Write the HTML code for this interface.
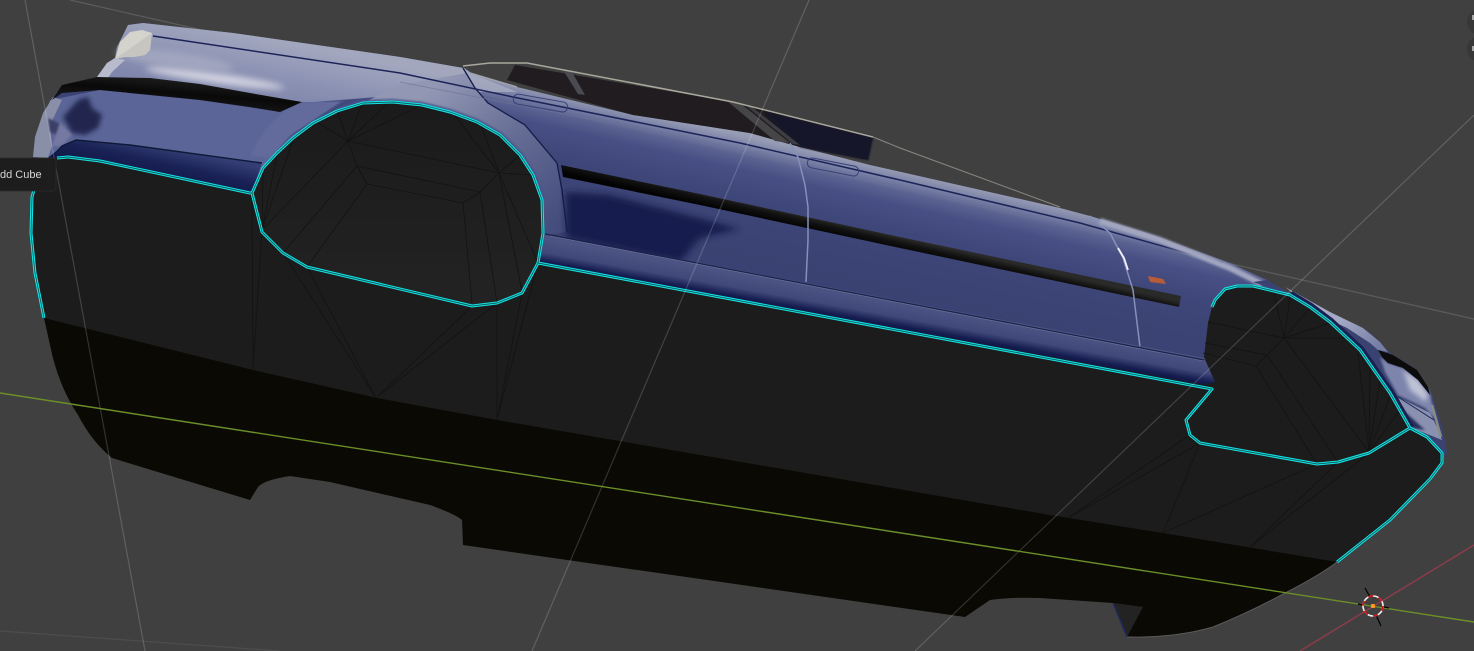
<!DOCTYPE html>
<html><head><meta charset="utf-8"><style>
html,body{margin:0;padding:0;background:#404040;width:1474px;height:651px;overflow:hidden}
svg{display:block}
</style></head><body>
<svg width="1474" height="651" viewBox="0 0 1474 651" xmlns="http://www.w3.org/2000/svg">
<defs>
<filter id="b1" x="-20%" y="-20%" width="140%" height="140%"><feGaussianBlur stdDeviation="1"/></filter>
<filter id="b2" x="-20%" y="-50%" width="140%" height="200%"><feGaussianBlur stdDeviation="2.5"/></filter>
<filter id="b3" x="-30%" y="-60%" width="160%" height="220%"><feGaussianBlur stdDeviation="3.5"/></filter>
<filter id="b5" x="-30%" y="-100%" width="160%" height="300%"><feGaussianBlur stdDeviation="5"/></filter>
<linearGradient id="body" gradientUnits="userSpaceOnUse" x1="600" y1="103" x2="556" y2="298">
<stop offset="0" stop-color="#989db6"/><stop offset=".05" stop-color="#7b82a6"/><stop offset=".1" stop-color="#5b6392"/>
<stop offset=".17" stop-color="#484f84"/><stop offset=".3" stop-color="#3f477a"/><stop offset=".5" stop-color="#3b4374"/><stop offset="1" stop-color="#394170"/>
</linearGradient>
<linearGradient id="mould" gradientUnits="userSpaceOnUse" x1="800" y1="285" x2="795" y2="312.5">
<stop offset="0" stop-color="#4c5484"/><stop offset=".5" stop-color="#3f4879"/><stop offset=".8" stop-color="#151c50"/><stop offset="1" stop-color="#10173f"/>
</linearGradient>
<linearGradient id="deck" gradientUnits="userSpaceOnUse" x1="220" y1="30" x2="205" y2="105">
<stop offset="0" stop-color="#a2a7be"/><stop offset=".5" stop-color="#8a90b2"/><stop offset="1" stop-color="#7a81a8"/>
</linearGradient>
<linearGradient id="strip" gradientUnits="userSpaceOnUse" x1="870" y1="230" x2="867" y2="243">
<stop offset="0" stop-color="#2a2a28"/><stop offset=".45" stop-color="#111"/><stop offset="1" stop-color="#030303"/>
</linearGradient>
<linearGradient id="strip1" gradientUnits="userSpaceOnUse" x1="180" y1="80" x2="178" y2="104">
<stop offset="0" stop-color="#1c1c1c"/><stop offset=".55" stop-color="#090909"/><stop offset="1" stop-color="#141414"/>
</linearGradient>
<linearGradient id="band" gradientUnits="userSpaceOnUse" x1="170" y1="148" x2="163" y2="180">
<stop offset="0" stop-color="#343e74"/><stop offset=".5" stop-color="#1a2256"/><stop offset="1" stop-color="#121a4a"/>
</linearGradient>
<linearGradient id="rim" gradientUnits="userSpaceOnUse" x1="440" y1="80" x2="560" y2="220">
<stop offset="0" stop-color="#9298b4"/><stop offset=".5" stop-color="#656c94"/><stop offset="1" stop-color="#454d7e"/>
</linearGradient>
<linearGradient id="arch" gradientUnits="userSpaceOnUse" x1="400" y1="110" x2="400" y2="310">
<stop offset="0" stop-color="#1b1b1b"/><stop offset="1" stop-color="#232323"/>
</linearGradient>
<linearGradient id="endtop" gradientUnits="userSpaceOnUse" x1="1345" y1="315" x2="1375" y2="350">
<stop offset="0" stop-color="#a4a9c4"/><stop offset="1" stop-color="#767ea6"/>
</linearGradient>
</defs>

<rect width="1474" height="651" fill="#404040"/>

<g stroke="#5c5c5c" stroke-width="1.2" fill="none">
<line x1="70" y1="0" x2="1474" y2="319"/>
<line x1="0" y1="631" x2="280" y2="651" stroke="#4d4d4d"/>
</g>

<circle cx="1480" cy="22" r="13" fill="#373737"/><circle cx="1480" cy="49" r="13" fill="#373737"/>
<rect x="1472" y="15" width="2" height="5" fill="#a5a5a5"/><rect x="1472" y="46" width="2" height="5" fill="#a5a5a5"/>

<!-- lower black body -->
<path d="M1113 603L1143 607Q1150 615 1147 620L1127 637Z" fill="#232323"/>
<line x1="1113" y1="603" x2="1127" y2="637" stroke="#1d2a5e" stroke-width="1.5"/>
<path fill="#0a0904" d="M44 318L50 345Q58 385 78 415Q92 442 112 458L250 500L258 487Q264 480 290 476L330 482L430 505Q455 514 462 520L463 545L965 617L990 600Q1010 597 1040 598L1113 603L1143 607L1127 637Q1175 638 1213 627Q1250 612 1287 592Q1320 575 1337 562L1300 400L500 300Z"/>
<path d="M1127 637Q1175 638 1213 627Q1250 612 1287 592Q1320 575 1337 562" fill="none" stroke="#5a5a5a" stroke-width="1"/>

<!-- blue body base -->
<polygon fill="url(#body)" points="33,157 35,137 43,113 53,97 62,85 97,77 107,63 115,58 117,47 128,25 143,23 233,33 400,57 463,68 470,73 517,87 633,115 750,133 800,147 870,165 1060,208 1090,216 1147,233 1230,263 1267,280 1313,307 1370,333 1390,353 1413,367 1430,390 1442,427 1447,453 1430,480 1200,400 300,250 33,200"/>

<!-- windows / roof -->
<polygon fill="#201c1f" points="515,65 733,102 873,137 868,160 800,147 750,133 633,115 507,80"/>
<polygon fill="#12122a" points="765,112 873,137 868,160 800,147 780,128" filter="url(#b1)"/>
<polygon fill="#4a4a50" points="563,70 572,72 585,95 578,94"/>
<polygon fill="#454548" points="727,101 740,103 790,143 775,141"/>
<polygon fill="#3d3d44" points="745,105 752,107 800,145 793,144"/>
<polyline points="463,66 490,63 527,63 733,102 873,137" fill="none" stroke="#a8a89c" stroke-width="1.5"/>
<polyline points="873,137 900,148 1060,207" fill="none" stroke="#8a8a82" stroke-width="1"/>
<polyline points="463,68 470,73 517,87" fill="none" stroke="#a0a3ae" stroke-width="1.5"/>

<!-- rear deck -->
<polygon fill="url(#deck)" points="97,77 107,63 115,58 117,47 128,25 143,23 233,33 400,57 463,68 470,73 517,92 470,92 390,96 340,100 302,103 150,80"/>
<ellipse cx="215" cy="78" rx="70" ry="5" transform="rotate(8 215 78)" fill="#e6e6ee" opacity=".8" filter="url(#b3)"/>
<ellipse cx="175" cy="60" rx="60" ry="8" transform="rotate(8 175 60)" fill="#b0b4c8" opacity=".6" filter="url(#b3)"/>
<polygon fill="#d4d3cc" points="115,59 120,42 130,32 142,30 152,33 150,50 145,55 133,57 125,57"/>
<polygon fill="#c6c5c0" points="115,59 152,33 150,50 145,55 133,57 125,57"/>
<polygon fill="#b7bbcc" points="97,77 107,63 115,58 125,60 112,72 108,78"/>

<!-- rear flank -->
<polygon fill="#5b6597" points="50,100 100,90 200,100 280,112 302,102 340,102 290,135 262,168 250,193 100,161 57,158 45,155 38,137"/>
<polygon fill="#6a72a2" opacity=".5" points="285,111 300,103 345,100 300,130 270,158 250,155 265,130" filter="url(#b1)"/>
<polygon fill="#8a8fa8" points="33,157 35,137 43,113 53,97 62,100 50,125 52,146 48,158"/>
<polygon fill="#3a3f66" points="48,118 62,125 58,135 50,132" filter="url(#b1)"/>
<polygon fill="#20254f" points="63,117 78,100 88,97 92,108 102,115 98,128 85,135 72,133" filter="url(#b2)"/>
<polygon fill="#7478a0" points="52,146 60,122 72,135 62,146" filter="url(#b1)"/>
<polygon fill="url(#band)" points="48,158 62,146 76,140 130,145 262,163 252,193 100,161 57,158"/>
<polyline points="52,157 62,146 76,140 130,145 262,163" fill="none" stroke="#101838" stroke-width="1.4"/>

<!-- rear black strip -->
<polygon fill="url(#strip1)" points="52,100 62,85 97,77 150,78 200,84 250,93 302,102 280,112 250,107 200,100 150,95 100,90 62,93"/>

<!-- arch rim 1 -->
<polygon fill="url(#rim)" points="467,73 475,88 488,103 525,125 557,163 567,232 545,235 543,200 533,175 520,155 500,135 477,122 450,112 422,105 393,102 363,103 400,85"/>
<polyline points="337,111 363,103 393,102 422,105 450,112 477,122 500,135 520,155 533,175 542,200" fill="none" stroke="#4a5288" stroke-width="6" filter="url(#b1)"/>
<polyline points="463,68 475,88 488,103 525,125 557,163 562,190 567,232" fill="none" stroke="#131b48" stroke-width="1.3"/>

<!-- belt line & handles -->
<polyline points="153,36 400,73 513,97 740,143 900,180 1080,223 1223,263" fill="none" stroke="#1b2358" stroke-width="1.5"/>
<polyline points="400,82 620,125 1040,220" fill="none" stroke="#6f7391" stroke-width="1" opacity=".6"/>
<rect x="513" y="98" width="55" height="10" rx="5" transform="rotate(10 540 103)" fill="none" stroke="#39427a" stroke-width="1"/>
<rect x="807" y="162" width="52" height="10" rx="5" transform="rotate(11 833 167)" fill="none" stroke="#39427a" stroke-width="1"/>

<!-- side shading, strip -->
<polygon fill="#161f4e" points="566,192 610,195 660,208 710,221 740,229 700,238 680,262 640,254 566,238" filter="url(#b3)"/>
<polygon fill="url(#strip)" points="561,165 700,194 900,237 1181,296 1179,307 900,248 700,205 563,177"/>

<!-- door seams -->
<polyline points="790,143 798,157 805,185 808,207 808,240 806,282" fill="none" stroke="#8590bb" stroke-width="1.5"/>
<polyline points="1090,216 1110,233 1123,258 1133,290 1140,347" fill="none" stroke="#8590bb" stroke-width="1.5"/>
<polyline points="1118,248 1124,258 1128,270" fill="none" stroke="#f2f2f8" stroke-width="1.8"/>
<polygon fill="#b85c38" points="1148,276 1163,279 1166,284 1150,282"/>

<!-- moulding band -->
<polygon fill="url(#mould)" points="541,233 1204,358 1215,382 1212,389 538,263"/>
<line x1="545" y1="234" x2="1204" y2="360" stroke="#1a2148" stroke-width="1.2"/>
<line x1="550" y1="236" x2="1204" y2="361" stroke="#7a7f9f" stroke-width=".6" opacity=".7"/>

<!-- top-edge light on right -->
<polyline points="1100,221 1160,240 1230,268 1262,284" fill="none" stroke="#a2a6bf" stroke-width="6" filter="url(#b1)"/>

<!-- right end -->
<polygon fill="#3a4272" points="1253,282 1267,280 1313,307 1370,333 1390,353 1413,367 1430,390 1442,427 1447,453 1430,445 1410,428 1390,393 1360,350 1330,322 1310,307 1290,295"/>
<polygon fill="url(#endtop)" points="1285,287 1330,312 1363,328 1380,342 1388,352 1378,350 1370,343 1347,328 1330,320 1310,306"/>
<polygon fill="#7d85ac" points="1380,357 1388,363 1403,368 1418,380 1430,395 1436,420 1425,408 1398,395 1385,372" filter="url(#b1)"/>
<polygon fill="#bfc3d6" points="1403,370 1418,380 1428,394 1426,402 1410,390" filter="url(#b2)"/>
<polygon fill="#8a90b0" points="1398,397 1430,413 1437,427 1442,440 1412,428"/>
<polygon fill="#262d5c" points="1403,410 1425,430 1412,428" filter="url(#b1)"/>
<line x1="1398" y1="397" x2="1434" y2="420" stroke="#1c2450" stroke-width="1"/>
<line x1="1432" y1="405" x2="1441" y2="437" stroke="#8a8a85" stroke-width="2.5"/>
<polyline points="1290,295 1310,307 1330,322 1360,350 1390,393 1410,428" fill="none" stroke="#1a2050" stroke-width="9"/>
<polygon fill="#0c0c0c" points="1378,350 1393,355 1417,370 1428,387 1430,395 1418,380 1403,368 1388,363 1382,357"/>

<!-- dark mesh surface -->
<polygon fill="#1c1c1c" points="44,318 37,280 31,233 32,197 34,190 45,158 57,158 68,157 100,161 250,193 263,168 277,153 293,138 313,123 337,111 363,103 393,102 422,105 450,112 477,122 500,135 520,155 533,175 542,200 543,233 540,263 1204,385 1215,382 1204,357 1208,323 1212,307 1215,300 1225,289 1237,286 1253,286 1290,295 1310,307 1330,322 1360,350 1390,393 1410,428 1427,437 1442,453 1442,463 1430,479 1390,520 1337,562 1163,533 1050,515 497,420 377,398 253,370"/>
<polygon fill="url(#arch)" points="252,193 262,232 283,253 307,267 472,306 497,303 522,293 538,263 543,233 542,200 533,175 520,155 500,135 477,122 450,112 422,105 393,102 363,103 337,111 313,123 293,138 277,153 263,168"/>

<!-- mesh wires -->
<g stroke="#131313" stroke-width=".8" fill="none">
<path d="M348 141L499 173M357 166L480 192M367 184L463 203M348 141L357 166L367 184M499 173L480 192L463 203"/>
<path d="M348 141L318 123M348 141L337 111M348 141L362 104M348 141L388 103M348 141L422 105M348 141L262 230"/>
<path d="M357 166L283 253M367 184L307 267M463 203L472 303M480 192L497 303M499 173L522 292"/>
<path d="M499 173L453 113M499 173L480 123M499 173L520 155M499 173L533 175M499 173L538 263"/>
<path d="M262 230L293 140M262 230L277 155M262 230L263 170"/>
<path d="M252 193L253 370M262 232L253 370M283 253L376 398M307 267L376 398M472 306L376 398M497 303L376 398M497 303L497 420M522 293L497 420M538 263L497 420"/>
<path d="M1208 322L1284 338M1205 343L1267 355M1203 353L1256 366M1284 338L1267 355L1256 366"/>
<path d="M1284 338L1273 290M1284 338L1290 297M1284 338L1310 308M1284 338L1330 323M1284 338L1347 338M1284 338L1369 452M1267 355L1338 462M1256 366L1317 464"/>
<path d="M1369 452L1358 353M1369 452L1370 367M1369 452L1380 380M1369 452L1390 397M1369 452L1400 410"/>
<path d="M1190 435L1068 518M1200 443L1068 518M1200 443L1163 533M1317 464L1163 533M1338 462L1250 547M1369 453L1250 547"/>
<path d="M1185 420L1190 440"/>
</g>

<!-- cyan edges -->
<g fill="none" stroke-linejoin="round">
<path stroke="#12e6e6" stroke-width="3" d="M44 318L35 273L31 233L32 197L34 190M57 158L68 157L100 161L250 193L252 193L262 232L283 253L307 267L472 306L497 303L522 293L538 263L543 233L542 200L533 175L520 155L500 135L477 122L450 112L422 105L393 102L363 103L337 111L313 123L293 138L277 153L263 168L252 193M538 263L1212 389L1186 420L1190 435L1200 443L1317 464L1338 462L1369 453L1410 428L1390 393L1360 350L1330 322L1310 307L1290 295L1253 286L1237 286L1225 289L1215 300L1212 307M1410 428L1427 437L1442 453L1442 463L1430 479L1390 520L1337 562"/>
<path stroke="#145a5e" stroke-width=".9" d="M44 318L35 273L31 233L32 197L34 190M57 158L68 157L100 161L250 193L252 193L262 232L283 253L307 267L472 306L497 303L522 293L538 263L543 233L542 200L533 175L520 155L500 135L477 122L450 112L422 105L393 102L363 103L337 111L313 123L293 138L277 153L263 168L252 193M538 263L1212 389L1186 420L1190 435L1200 443L1317 464L1338 462L1369 453L1410 428L1390 393L1360 350L1330 322L1310 307L1290 295L1253 286L1237 286L1225 289L1215 300L1212 307M1410 428L1427 437L1442 453L1442 463L1430 479L1390 520L1337 562"/>
</g>

<!-- grid lines over -->
<g fill="none" stroke="#ffffff" stroke-opacity=".17" stroke-width="1.2">
<line x1="25" y1="0" x2="145" y2="651"/>
<line x1="809" y1="0" x2="532" y2="651"/>
<line x1="1474" y1="115" x2="915" y2="651"/>
</g>
<line x1="1300" y1="651" x2="1474" y2="545" stroke="#8a3c4a" stroke-width="1.5"/>
<line x1="0" y1="393" x2="1474" y2="622" stroke="#6c8e28" stroke-width="1.4"/>

<!-- 3D cursor -->
<g fill="none">
<path d="M1365 588L1370 597M1376 615L1381 626M1358 604L1363 605M1384 607L1389 608" stroke="#000" stroke-width="1.2"/>
<circle cx="1373" cy="606" r="10" stroke="#f0f0f0" stroke-width="1.6"/>
<circle cx="1373" cy="606" r="10" stroke="#d01818" stroke-width="1.8" stroke-dasharray="5 5.5"/>
</g>
<rect x="1371" y="604" width="4" height="4" rx="1" fill="#ff9a1e"/>

<!-- tooltip -->
<rect x="-10" y="158" width="66" height="33" rx="3" fill="#1d1d1d" stroke="#2a2a2a" stroke-width=".8"/>
<text x="0" y="178" font-family="'Liberation Sans',sans-serif" font-size="11" fill="#d6d6d6">dd Cube</text>
</svg>
</body></html>
